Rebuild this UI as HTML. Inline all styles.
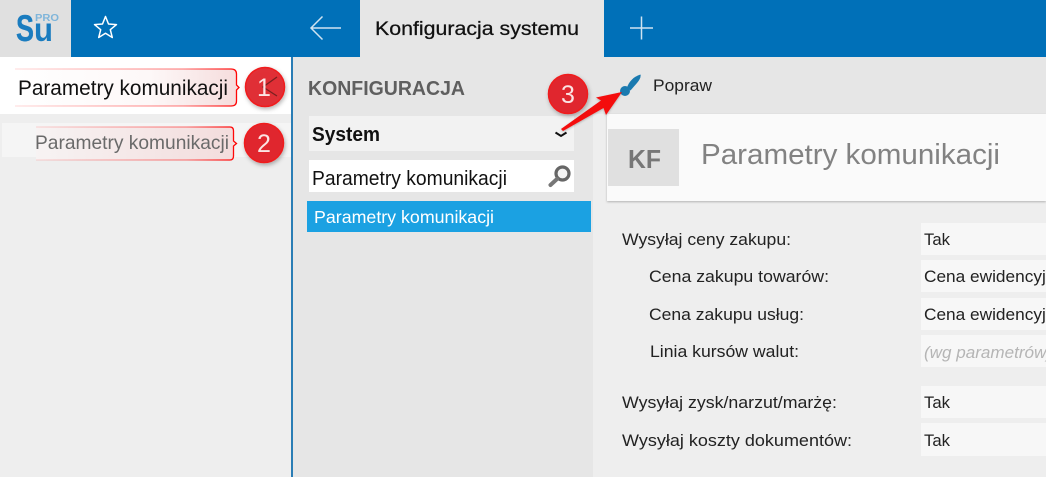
<!DOCTYPE html>
<html><head><meta charset="utf-8"><style>
html,body{margin:0;padding:0;width:1046px;height:477px;overflow:hidden;background:#eee}
svg{display:block}
text{font-family:"Liberation Sans",sans-serif}
</style></head><body>
<svg width="1046" height="477" viewBox="0 0 1046 477" xmlns="http://www.w3.org/2000/svg">
<defs>
<linearGradient id="g1" x1="0" x2="1" y1="0" y2="0"><stop offset="0" stop-color="#fff"/><stop offset=".6" stop-color="#fdf8f8"/><stop offset="1" stop-color="#f5dcdc"/></linearGradient>
<linearGradient id="g2" x1="0" x2="1" y1="0" y2="0"><stop offset="0" stop-color="#f7f3f3"/><stop offset="1" stop-color="#f3dcdc"/></linearGradient>
<linearGradient id="ls" x1="0" x2="1" y1="0" y2="0"><stop offset="0" stop-color="#f00" stop-opacity=".12"/><stop offset=".75" stop-color="#f00" stop-opacity=".45"/><stop offset="1" stop-color="#f00"/></linearGradient>
<filter id="sh" x="-30%" y="-30%" width="160%" height="160%"><feDropShadow dx="1" dy="2" stdDeviation="2" flood-color="#000" flood-opacity=".3"/></filter>
<filter id="cs" x="-5%" y="-20%" width="110%" height="140%"><feDropShadow dx="0" dy="1" stdDeviation="1" flood-color="#000" flood-opacity=".25"/></filter>
</defs>

<!-- backgrounds -->
<rect width="1046" height="477" fill="#eeeeee"/>
<rect x="293" y="57" width="300" height="420" fill="#e6e6e6"/>
<rect x="593" y="57" width="453" height="57" fill="#e6e6e6"/>
<rect x="291" y="57" width="2" height="420" fill="#2a7db5"/>
<rect x="0" y="57" width="291" height="57" fill="#fff"/>
<rect x="2" y="123" width="289" height="34" fill="#f5f5f5"/>

<!-- top bar -->
<rect width="1046" height="57" fill="#0070b8"/>
<rect width="71" height="57" fill="#e0e0e0"/>
<rect x="360" width="244" height="57" fill="#e6e6e6"/>
<text x="16" y="41" font-size="37" font-weight="bold" fill="#1a7cbf" stroke="#1a7cbf" stroke-width=".4" textLength="18" lengthAdjust="spacingAndGlyphs">S</text>
<text x="34" y="41" font-size="33" font-weight="bold" fill="#1a7cbf" textLength="19" lengthAdjust="spacingAndGlyphs">u</text>
<text x="35" y="21" font-size="10" font-weight="bold" fill="#7fb5da" textLength="24" lengthAdjust="spacingAndGlyphs">PRO</text>
<path d="M105.500 16.500l3 7.500 8 .6-6.200 5.100 2 7.800-6.800-4.300-6.800 4.300 2-7.800-6.200-5.100 8-.6z" fill="none" stroke="#fff" stroke-width="1.500" stroke-linejoin="round"/>
<path d="M341 28H311.500M322.500 16.500L311 28l11.500 11.500" fill="none" stroke="#cfe3f1" stroke-width="1.500"/>
<path d="M641.500 16.500V39.500M630 28H653" fill="none" stroke="#cfe3f1" stroke-width="1.500"/>
<text x="375" y="35" font-size="19" fill="#111" stroke="#111" stroke-width=".25" textLength="204" lengthAdjust="spacingAndGlyphs">Konfiguracja systemu</text>

<!-- left sidebar -->
<path d="M15 69H231q6 0 6 5v11l2.500 2.500-2.500 2.500v11q0 5-6 5H15z" fill="url(#g1)"/>
<path d="M15 69H231q5.500 0 5.500 5v11l2.500 2.500-2.500 2.500v11q0 5-5.500 5H15" fill="none" stroke="url(#ls)" stroke-width="1.300"/>
<text x="18" y="95" font-size="21" fill="#111" textLength="210" lengthAdjust="spacingAndGlyphs">Parametry komunikacji</text>
<path d="M36 127H230q4 0 4 4v10l2.500 2.500-2.500 2.500v10q0 4-4 4H36z" fill="url(#g2)"/>
<path d="M36 127H230q3.500 0 3.500 4v10l3 2.500-3 2.500v10q0 4-3.500 4H36" fill="none" stroke="url(#ls)" stroke-width="1.300"/>
<text x="35" y="149" font-size="19.500" fill="#6a6a6a" textLength="194" lengthAdjust="spacingAndGlyphs">Parametry komunikacji</text>

<circle cx="265" cy="87" r="19.500" fill="#e0282e" fill-opacity=".95" stroke="#f01a1e" stroke-width="1.500" filter="url(#sh)"/>
<path d="M277 77L263 87 277 96" fill="none" stroke="#7a2020" stroke-width="1.300"/>
<text x="264" y="96" font-size="25" fill="#fbe4e4" text-anchor="middle">1</text>
<circle cx="264" cy="143" r="19.500" fill="#e0282e" stroke="#f01a1e" stroke-width="1.500" filter="url(#sh)"/>
<text x="264" y="152" font-size="25" fill="#fbe4e4" text-anchor="middle">2</text>

<!-- middle column -->
<text x="308" y="95" font-size="20" font-weight="bold" fill="#5f5f5f" textLength="157" lengthAdjust="spacingAndGlyphs">KONFIGURACJA</text>
<rect x="309" y="116" width="265" height="35" fill="#f2f2f2"/>
<text x="312" y="141" font-size="20" font-weight="bold" fill="#111" textLength="68" lengthAdjust="spacingAndGlyphs">System</text>
<path d="M555.500 132.500l5.500 3.500 5.500-3.500" fill="none" stroke="#111" stroke-width="2"/>
<rect x="309" y="160" width="265" height="32" fill="#fff"/>
<text x="312" y="185" font-size="20" fill="#111" textLength="195" lengthAdjust="spacingAndGlyphs">Parametry komunikacji</text>
<circle cx="562.500" cy="173.500" r="6.500" fill="#f4f4f4" stroke="#666" stroke-width="3.200"/>
<path d="M557 179l-6.500 6" stroke="#777" stroke-width="4" stroke-linecap="round"/>
<rect x="307" y="201" width="284" height="31" fill="#1ba1e2"/>
<text x="314" y="223" font-size="17.500" fill="#fff" textLength="180" lengthAdjust="spacingAndGlyphs">Parametry komunikacji</text>

<!-- toolbar -->
<path d="M640.500 74.500q.8 3.500-3.500 8.500t-6.500 7.500l-3.500-3q1.500-4.500 5-8t8.500-5z" fill="#1a7ab0"/>
<circle cx="625" cy="91" r="5" fill="#1a7ab0"/>
<text x="653" y="91" font-size="16.500" fill="#222" textLength="59" lengthAdjust="spacingAndGlyphs">Popraw</text>

<!-- header card -->
<rect x="607" y="114" width="439" height="87" fill="#fafafa" filter="url(#cs)"/>
<rect x="608" y="129" width="71" height="57" fill="#e0e0e0"/>
<text x="628" y="168" font-size="26" font-weight="bold" fill="#777" textLength="33" lengthAdjust="spacingAndGlyphs">KF</text>
<text x="701" y="164" font-size="29" fill="#828282" textLength="299" lengthAdjust="spacingAndGlyphs">Parametry komunikacji</text>

<!-- form -->
<g fill="#f7f7f7">
<rect x="921" y="223" width="125" height="32"/>
<rect x="921" y="260" width="125" height="32"/>
<rect x="921" y="298" width="125" height="32"/>
<rect x="921" y="335" width="125" height="32"/>
<rect x="921" y="386" width="125" height="32"/>
<rect x="921" y="423" width="125" height="33"/>
</g>
<g font-size="16.500" fill="#222">
<text x="622" y="245" textLength="169" lengthAdjust="spacingAndGlyphs">Wysyłaj ceny zakupu:</text>
<text x="649" y="282" textLength="180" lengthAdjust="spacingAndGlyphs">Cena zakupu towarów:</text>
<text x="649" y="320" textLength="155" lengthAdjust="spacingAndGlyphs">Cena zakupu usług:</text>
<text x="650" y="357" textLength="149" lengthAdjust="spacingAndGlyphs">Linia kursów walut:</text>
<text x="622" y="408" textLength="215" lengthAdjust="spacingAndGlyphs">Wysyłaj zysk/narzut/marżę:</text>
<text x="622" y="446" textLength="230" lengthAdjust="spacingAndGlyphs">Wysyłaj koszty dokumentów:</text>
<text x="924" y="245" textLength="26" lengthAdjust="spacingAndGlyphs">Tak</text>
<text x="924" y="282" textLength="141" lengthAdjust="spacingAndGlyphs">Cena ewidencyjna</text>
<text x="924" y="320" textLength="141" lengthAdjust="spacingAndGlyphs">Cena ewidencyjna</text>
<text x="924" y="408" textLength="26" lengthAdjust="spacingAndGlyphs">Tak</text>
<text x="924" y="446" textLength="26" lengthAdjust="spacingAndGlyphs">Tak</text>
<text x="924" y="358" font-style="italic" fill="#b5b5b5" textLength="128" lengthAdjust="spacingAndGlyphs">(wg parametrów)</text>
</g>

<!-- badge 3 + arrow -->
<path d="M561 129L601 100.500 596 97.500 622 92 606 115 603.500 108 563 131z" fill="#f40a0a" filter="url(#cs)"/>
<circle cx="568" cy="94" r="19.500" fill="#e0282e" stroke="#f01a1e" stroke-width="1.500" filter="url(#sh)"/>
<text x="568" y="103" font-size="25" fill="#fbe4e4" text-anchor="middle">3</text>
</svg>
</body></html>
